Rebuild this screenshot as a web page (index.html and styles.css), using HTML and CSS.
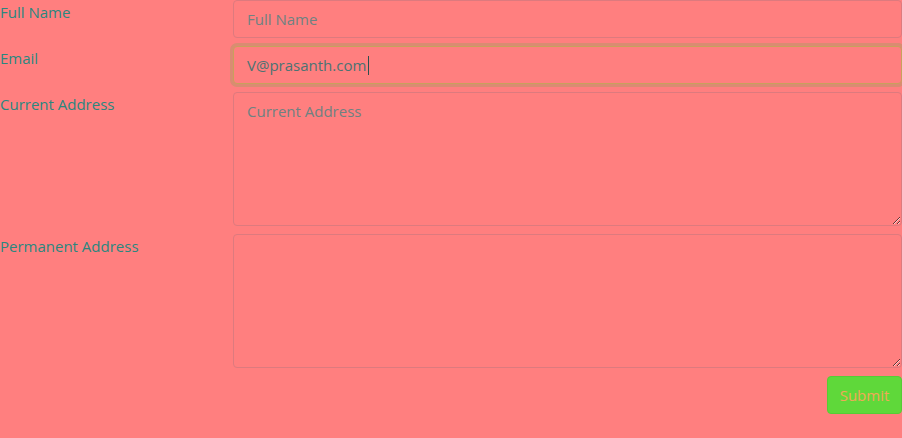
FILE: index.html
```html
<!DOCTYPE html>
<html lang="en">
<head>
<meta charset="utf-8">
<title>Form</title>
<link rel="stylesheet" href="styles.css">
</head>
<body>
<form class="form">
  <div class="row">
    <label class="label" for="fullname">Full Name</label>
    <input class="control" id="fullname" type="text" placeholder="Full Name">
  </div>
  <div class="row">
    <label class="label" for="email">Email</label>
    <div class="field">
      <input class="control focused" id="email" type="email" value="V@prasanth.com">
      <span class="caret"></span>
    </div>
  </div>
  <div class="row">
    <label class="label" for="current">Current Address</label>
    <textarea class="control area" id="current" rows="5" placeholder="Current Address"></textarea>
  </div>
  <div class="row">
    <label class="label" for="permanent">Permanent Address</label>
    <textarea class="control area" id="permanent" rows="5"></textarea>
  </div>
  <div class="actions">
    <button class="btn" type="button">Submit</button>
  </div>
</form>
</body>
</html>
```

FILE: styles.css
```css
html, body {
  margin: 0;
  padding: 0;
  background: #ff7f7f;
}
body {
  font-family: "Open Sans", "DejaVu Sans", sans-serif;
  font-size: 15px;
  line-height: 24px;
  color: #2a877f;
  width: 902px;
  height: 438px;
  overflow: hidden;
}
.form {
  display: flex;
  flex-direction: column;
  gap: 8px;
}
.row {
  display: grid;
  grid-template-columns: 233px 669px;
  align-items: start;
}
.label {
  display: block;
  line-height: 24px;
  color: #2a877f;
}
.field {
  position: relative;
}
.control {
  box-sizing: border-box;
  display: block;
  width: 669px;
  height: 38px;
  margin: 0;
  padding: 6px 12px 6px 13px;
  font-family: inherit;
  font-size: 15px;
  line-height: 24px;
  color: #4c7373;
  background: #ff7f7f;
  border: 1px solid #dd7a7e;
  border-radius: 4px;
  outline: none;
}
.control::placeholder {
  color: #6e8282;
  opacity: 1;
}
.control.focused {
  border-color: #c9a05c;
  box-shadow: 0 0 0 3px #d98c72;
}
.area {
  height: 134px;
  resize: vertical;
}
.caret {
  position: absolute;
  left: 135px;
  top: 10px;
  width: 1px;
  height: 19px;
  background: #2f4f4f;
}
.actions {
  display: flex;
  justify-content: flex-end;
}
.btn {
  box-sizing: border-box;
  width: 75px;
  height: 38px;
  padding: 6px 0;
  font-family: inherit;
  font-size: 15px;
  line-height: 24px;
  color: #f0a858;
  background: #5fd83a;
  border: 1px solid #56cc36;
  border-radius: 4px;
}
```
